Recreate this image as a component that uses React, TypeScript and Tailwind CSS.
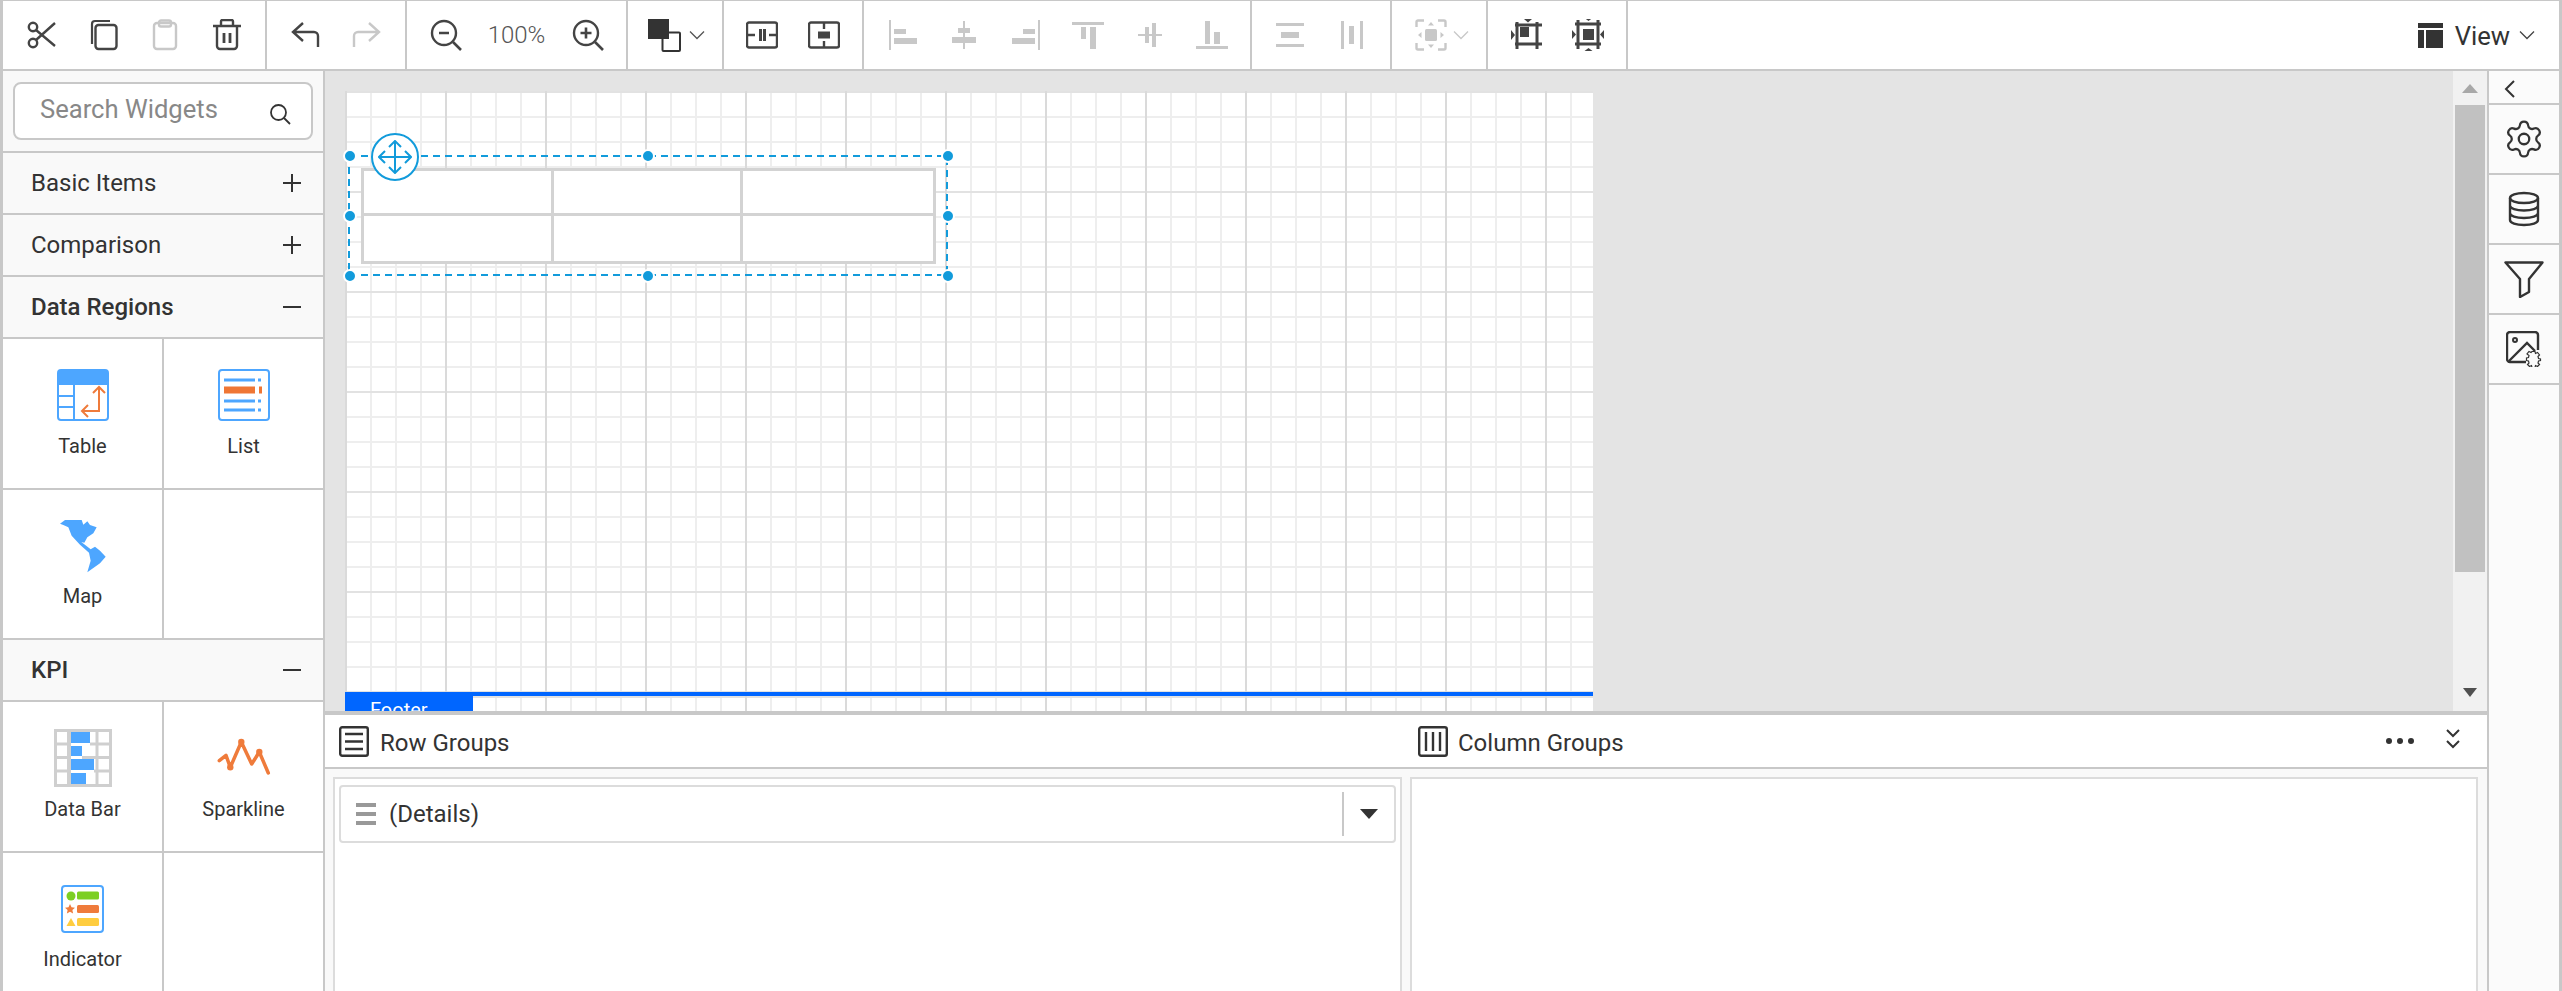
import type { ReactNode } from "react"
import { Settings } from "lucide-react"

const Ico = ({ children, size = 32, className = "" }: { children: ReactNode; size?: number; className?: string }) => (
  <svg width={size} height={size} viewBox="0 0 32 32" fill="none" stroke="currentColor" strokeWidth="2" className={className}>
    {children}
  </svg>
)

const Chevron = ({ className = "" }: { className?: string }) => (
  <svg width="16" height="10" viewBox="0 0 16 10" fill="none" stroke="currentColor" strokeWidth="1.3" className={className}>
    <path d="M1 1.5l7 7 7-7" />
  </svg>
)

function ToolBtn({ children, off }: { children: ReactNode; off?: boolean }) {
  return <div className={`flex h-full w-[62px] items-center justify-center ${off ? "text-[#c8c8c8]" : "text-[#444444]"}`}>{children}</div>
}

function Group({ children, w }: { children: ReactNode; w: string }) {
  return <div className={`flex h-full shrink-0 items-center justify-center border-r-2 border-[#c8c8c8] ${w}`}>{children}</div>
}

function Toolbar() {
  return (
    <div className="flex h-[71px] shrink-0 border-y-2 border-t-[1px] border-[#c8c8c8] bg-white">
      <Group w="w-[264px]">
        <ToolBtn>
          <Ico>
            <circle cx="8" cy="8" r="4.200" strokeWidth="2.400" />
            <circle cx="8" cy="24" r="4.200" strokeWidth="2.400" />
            <path d="M11 11l19 16M11 21L30 4" strokeWidth="2.400" />
          </Ico>
        </ToolBtn>
        <ToolBtn>
          <Ico>
            <path d="M5 25V5a3 3 0 0 1 3-3h15" strokeWidth="2.200" />
            <rect x="8.500" y="6" width="21" height="24" rx="3" strokeWidth="2.400" />
          </Ico>
        </ToolBtn>
        <ToolBtn off>
          <Ico>
            <rect x="5" y="4" width="22" height="26" rx="3" strokeWidth="2.400" />
            <rect x="10" y="1.500" width="12" height="6" rx="2" strokeWidth="2.400" />
          </Ico>
        </ToolBtn>
        <ToolBtn>
          <Ico>
            <path d="M2 7h28M10 7V2.500a1.500 1.500 0 0 1 1.500-1.500h9A1.500 1.500 0 0 1 22 2.500V7M6 7v20a3 3 0 0 0 3 3h14a3 3 0 0 0 3-3V7" strokeWidth="2.400" />
            <path d="M13 14v10M19 14v10" strokeWidth="2.800" />
          </Ico>
        </ToolBtn>
      </Group>
      <Group w="w-[140px]">
        <ToolBtn>
          <Ico>
            <path d="M14 4L4 13l10 9M4 13h21a4 4 0 0 1 4 4v11" strokeWidth="2.400" />
          </Ico>
        </ToolBtn>
        <ToolBtn off>
          <Ico>
            <path d="M18 4l10 9-10 9M28 13H7a4 4 0 0 0-4 4v11" strokeWidth="2.400" />
          </Ico>
        </ToolBtn>
      </Group>
      <Group w="w-[221px]">
        <div className="flex h-full w-[74px] items-center justify-center text-[#444444]">
          <Ico>
            <circle cx="14" cy="14" r="12" strokeWidth="2.400" />
            <path d="M9 14h10M23 23l8 8" strokeWidth="2.600" />
          </Ico>
        </div>
        <div className="w-[68px] text-center text-[24px] font-light text-[#555555]">100%</div>
        <div className="flex h-full w-[74px] items-center justify-center text-[#444444]">
          <Ico>
            <circle cx="14" cy="14" r="12" strokeWidth="2.400" />
            <path d="M8.500 14h11M14 8.500v11M23 23l8 8" strokeWidth="2.600" />
          </Ico>
        </div>
      </Group>
      <Group w="w-[96px]">
        <svg width="33" height="33" viewBox="0 0 33 33" className="ml-[3px]">
          <rect x="14.500" y="13.500" width="17.500" height="18.500" rx="1" fill="#fff" stroke="#333" strokeWidth="2" />
          <rect x="0" y="0" width="21" height="20" fill="#333" />
        </svg>
        <Chevron className="ml-[8px] text-[#555555]" />
      </Group>
      <Group w="w-[140px]">
        <ToolBtn>
          <Ico>
            <rect x="1" y="3.500" width="30" height="25" rx="2" strokeWidth="2.400" />
            <path d="M1 16h8M23 16h8" strokeWidth="2.400" />
            <rect x="13" y="10" width="3" height="12" fill="currentColor" stroke="none" />
            <rect x="17" y="10" width="3" height="12" fill="currentColor" stroke="none" />
          </Ico>
        </ToolBtn>
        <ToolBtn>
          <Ico>
            <rect x="1" y="3.500" width="30" height="25" rx="2" strokeWidth="2.400" />
            <path d="M16 3.500V10M16 22v6.500" strokeWidth="2.400" />
            <rect x="10" y="12.500" width="12" height="7" fill="currentColor" stroke="none" />
          </Ico>
        </ToolBtn>
      </Group>
      <Group w="w-[388px]">
        <ToolBtn off>
          <Ico>
            <g fill="currentColor" stroke="none">
              <rect x="3" y="1" width="2" height="30" />
              <rect x="8" y="10" width="12" height="5" />
              <rect x="8" y="19" width="23" height="6" />
            </g>
          </Ico>
        </ToolBtn>
        <ToolBtn off>
          <Ico>
            <g fill="currentColor" stroke="none">
              <rect x="15" y="2" width="2" height="28" />
              <rect x="10" y="9" width="12" height="5" />
              <rect x="4" y="18" width="24" height="6" />
            </g>
          </Ico>
        </ToolBtn>
        <ToolBtn off>
          <Ico>
            <g fill="currentColor" stroke="none">
              <rect x="28" y="1" width="2" height="30" />
              <rect x="13" y="10" width="12" height="5" />
              <rect x="2" y="19" width="23" height="6" />
            </g>
          </Ico>
        </ToolBtn>
        <ToolBtn off>
          <Ico>
            <g fill="currentColor" stroke="none">
              <rect x="0" y="3" width="32" height="3" />
              <rect x="9" y="8" width="5" height="12" />
              <rect x="18" y="8" width="6" height="22" />
            </g>
          </Ico>
        </ToolBtn>
        <ToolBtn off>
          <Ico>
            <g fill="currentColor" stroke="none">
              <rect x="4" y="15" width="24" height="2" />
              <rect x="11" y="8" width="4" height="16" />
              <rect x="18" y="4" width="4" height="24" />
            </g>
          </Ico>
        </ToolBtn>
        <ToolBtn off>
          <Ico>
            <g fill="currentColor" stroke="none">
              <rect x="0" y="27" width="32" height="3" />
              <rect x="9" y="2" width="5" height="23" />
              <rect x="18" y="13" width="6" height="12" />
            </g>
          </Ico>
        </ToolBtn>
      </Group>
      <Group w="w-[140px]">
        <ToolBtn off>
          <Ico>
            <g fill="currentColor" stroke="none">
              <rect x="2" y="4" width="28" height="3" />
              <rect x="7" y="13" width="18" height="6" />
              <rect x="2" y="25" width="28" height="3" />
            </g>
          </Ico>
        </ToolBtn>
        <ToolBtn off>
          <Ico>
            <g fill="currentColor" stroke="none">
              <rect x="5" y="2" width="3" height="28" />
              <rect x="13" y="7" width="5" height="18" />
              <rect x="24" y="2" width="3" height="28" />
            </g>
          </Ico>
        </ToolBtn>
      </Group>
      <Group w="w-[96px]">
        <div className="ml-[6px] text-[#c8c8c8]">
          <Ico>
            <path d="M1.500 8V3a1.500 1.500 0 0 1 1.500-1.500h6M23 1.500h6A1.500 1.500 0 0 1 30.500 3v5M1.500 24v5A1.500 1.500 0 0 0 3 30.500h6M23 30.500h6a1.500 1.500 0 0 0 1.500-1.500v-5" strokeWidth="2.400" />
            <rect x="10" y="10" width="12" height="12" rx="1.500" fill="currentColor" stroke="none" />
            <path d="M16 3l3 3.500h-6zM16 29l3-3.500h-6zM3 16l3.500-3v6zM29 16l-3.500-3v6z" fill="currentColor" stroke="none" />
          </Ico>
        </div>
        <Chevron className="ml-[6px] text-[#c8c8c8]" />
      </Group>
      <Group w="w-[140px]">
        <ToolBtn>
          <Ico>
            <path d="M7 3v27M27 3v27M5 6h27M5 25h27" strokeWidth="3" />
            <path d="M10 8h9v10H10z" fill="currentColor" stroke="none" />
            <path d="M1 11l4 5-4 5zM14 0h8l-4 3.500z" fill="currentColor" stroke="none" />
          </Ico>
        </ToolBtn>
        <ToolBtn>
          <Ico>
            <path d="M6 1v29M26 1v29M3 5h26M3 25h26" strokeWidth="3" />
            <rect x="11" y="10" width="11" height="11" fill="currentColor" stroke="none" />
            <path d="M12.500-1h8L16.500 2zM12.500 32h8l-4-3zM0 11l4 4.500L0 20zM32 11l-4 4.500 4 4.500z" fill="currentColor" stroke="none" />
          </Ico>
        </ToolBtn>
      </Group>
      <div className="flex flex-1 items-center justify-end pr-[24px] text-[#333333]">
        <svg width="25" height="25" viewBox="0 0 25 25" fill="#333">
          <rect x="0" y="0" width="25" height="5" />
          <rect x="0" y="7" width="6" height="18" />
          <rect x="8" y="7" width="17" height="18" />
        </svg>
        <span className="ml-[12px] mt-[3px] text-[25.6px]">View</span>
        <Chevron className="ml-[9px] text-[#444444]" />
      </div>
    </div>
  )
}

function AccordionRow({ label, open }: { label: string; open?: boolean }) {
  return (
    <div className="flex h-[62px] shrink-0 items-center justify-between border-b-2 border-[#c8c8c8] bg-[#f9f9f9] pl-[28px] pr-[22px]">
      <span className={`text-[24px] leading-none text-[#333333] ${open ? "font-medium" : ""}`}>{label}</span>
      <svg width="18" height="18" viewBox="0 0 18 18" stroke="#333" strokeWidth="2">
        <path d="M0 9h18" />
        {!open && <path d="M9 0v18" />}
      </svg>
    </div>
  )
}

function Tile({ icon, label }: { icon?: ReactNode; label?: string }) {
  return (
    <div className="flex h-[150.5px] flex-col items-center border-b-2 border-r-2 border-[#c8c8c8] pt-[26px] even:border-r-0">
      <div className="flex h-[60px] items-center justify-center">{icon}</div>
      <div className="mt-[8.500px] text-[20px] leading-[24px] text-[#333333]">{label}</div>
    </div>
  )
}

const TableIcon = () => (
  <svg width="52" height="52" viewBox="0 0 52 52" fill="none">
    <rect x="1" y="1" width="50" height="50" rx="3" stroke="#4da6ff" strokeWidth="2" />
    <rect x="1" y="1" width="50" height="15" fill="#4da6ff" />
    <path d="M2 27h16M2 38h16M17 16v34" stroke="#4da6ff" strokeWidth="2" />
    <path d="M42 18v24H25M36 24l6-6 6 6M31 36l-6 6 6 6" stroke="#ef7b3b" strokeWidth="2" />
  </svg>
)
const ListIcon = () => (
  <svg width="52" height="52" viewBox="0 0 52 52" fill="none">
    <rect x="1" y="1" width="50" height="50" rx="3" stroke="#4da6ff" strokeWidth="2" />
    <path d="M6 11h31M40 11h3M6 32h31M40 32h3M6 41h31M40 41h3" stroke="#4da6ff" strokeWidth="3" />
    <path d="M6 21h31M41 21h3" stroke="#ef7634" strokeWidth="7" />
  </svg>
)
const MapIcon = () => (
  <svg width="48" height="54" viewBox="178 535 142 162">
    <path
      fill="#4da6ff"
      d="M180 549L195 538H245L250 552L262 542L270 553L290 560L280 578L262 590L253 606L244 604L272 626L285 618L300 630L317 648L300 668L262 695L272 660L267 636L240 612L215 585L205 560L190 553Z"
    />
  </svg>
)
const DataBarIcon = () => (
  <svg width="58" height="58" viewBox="0 0 58 58" fill="none">
    <rect x="16" y="3" width="20" height="11" fill="#4da6ff" />
    <rect x="16" y="17" width="12" height="10" fill="#4da6ff" />
    <rect x="16" y="30" width="24" height="11" fill="#4da6ff" />
    <rect x="16" y="44" width="16" height="11" fill="#4da6ff" />
    <path d="M1.500 1.500h55v55h-55zM1.500 15h14M36 15h21M1.500 28.500h14M28 28.500h29M1.500 42h14M40 42h17M43 1.500v55" stroke="#cfcfcf" strokeWidth="3" />
    <path d="M15 1v56" stroke="#cfcfcf" strokeWidth="4" />
  </svg>
)
const SparkIcon = () => (
  <svg width="54" height="40" viewBox="0 0 54 40" fill="none">
    <path d="M2.300 22.700L9 17.300l4.300 12L24.300 4l10.400 22 7.600-12 9 21" stroke="#ef7b3b" strokeWidth="3.500" strokeLinecap="round" strokeLinejoin="round" />
    <circle cx="13.300" cy="29.300" r="3.200" fill="#ef7b3b" />
    <circle cx="24.300" cy="4" r="3.200" fill="#ef7b3b" />
    <circle cx="42.300" cy="14" r="3.200" fill="#ef7b3b" />
  </svg>
)
const IndicatorIcon = () => (
  <svg width="44" height="48" viewBox="0 0 44 48" fill="none">
    <rect x="1" y="1" width="41" height="46" rx="3" stroke="#4da6ff" strokeWidth="2" />
    <circle cx="10" cy="11" r="4.500" fill="#7ccf22" />
    <rect x="16" y="6.500" width="22" height="8" rx="1.500" fill="#7ccf22" />
    <path d="M9 19l1.500 3.300 3.500.4-2.600 2.300.7 3.500-3.100-1.800-3.100 1.800.7-3.500L4 22.700l3.500-.4z" fill="#ef7b3b" />
    <rect x="16" y="20" width="22" height="8" rx="1.500" fill="#ef7b3b" />
    <path d="M10 33l4.500 8h-9z" fill="#ffcd3f" />
    <rect x="16" y="33" width="22" height="8" rx="1.500" fill="#ffcd3f" />
  </svg>
)

function Sidebar() {
  return (
    <div className="flex w-[322px] shrink-0 flex-col overflow-hidden border-r-2 border-[#c8c8c8] bg-white">
      <div className="flex h-[82px] shrink-0 items-start border-b-2 border-[#c8c8c8] bg-[#f9f9f9] pl-[10px] pt-[11px]">
        <div className="flex h-[58px] w-[300px] items-center justify-between rounded-[8px] border-2 border-[#c8c8c8] bg-white pl-[25px] pr-[20px]">
          <span className="-mt-[4px] text-[25.6px] text-[#888888]">Search Widgets</span>
          <svg width="22" height="22" viewBox="0 0 22 22" fill="none" stroke="#333" strokeWidth="1.800" className="mt-[6px]">
            <circle cx="9.500" cy="9.500" r="7.500" />
            <path d="M15 15l6 6" />
          </svg>
        </div>
      </div>
      <AccordionRow label="Basic Items" />
      <AccordionRow label="Comparison" />
      <AccordionRow label="Data Regions" open />
      <div className="grid grid-cols-[161px_1fr]">
        <Tile icon={<TableIcon />} label="Table" />
        <Tile icon={<ListIcon />} label="List" />
        <Tile icon={<MapIcon />} label="Map" />
        <Tile />
      </div>
      <AccordionRow label="KPI" open />
      <div className="grid grid-cols-[161px_1fr]">
        <Tile icon={<DataBarIcon />} label="Data Bar" />
        <Tile icon={<SparkIcon />} label="Sparkline" />
        <Tile icon={<IndicatorIcon />} label="Indicator" />
        <Tile />
      </div>
    </div>
  )
}

const gridBg =
  "bg-[linear-gradient(to_right,#dadada_2px,transparent_2px),linear-gradient(to_bottom,#e2e2e2_2px,transparent_2px),linear-gradient(to_right,#eeeeee_2px,transparent_2px),linear-gradient(to_bottom,#eeeeee_2px,transparent_2px)] bg-[size:100px_100px,100px_100px,25px_25px,25px_25px]"

const Handle = ({ pos }: { pos: string }) => (
  <div className={`absolute h-[14px] w-[14px] rounded-full border-2 border-white bg-[#129bdb] ${pos}`} />
)

function Canvas() {
  return (
    <div className="flex h-[640px] shrink-0">
      <div className="h-full flex-1 overflow-hidden bg-[#e4e4e4] pl-[20px] pt-[20px]">
        <div className="flex h-[640px] w-[1248px] flex-col bg-white">
          <div className={`relative h-[601px] shrink-0 ${gridBg}`}>
            <svg width="603" height="124" className="absolute left-[2px] top-[63px]" fill="none">
              <rect x="2" y="2" width="598" height="119" stroke="#129bdb" strokeWidth="2" strokeDasharray="7 5" />
            </svg>
            <div className="absolute left-[16px] top-[77px] grid h-[96px] w-[575px] grid-cols-3 grid-rows-2 border-[3px] border-[#d3d3d3] bg-white">
              <div className="border-b-[3px] border-r-[3px] border-[#d3d3d3]" />
              <div className="border-b-[3px] border-r-[3px] border-[#d3d3d3]" />
              <div className="border-b-[3px] border-[#d3d3d3]" />
              <div className="border-r-[3px] border-[#d3d3d3]" />
              <div className="border-r-[3px] border-[#d3d3d3]" />
              <div />
            </div>
            <Handle pos="left-[-2px] top-[58px]" />
            <Handle pos="left-[296px] top-[58px]" />
            <Handle pos="left-[596px] top-[58px]" />
            <Handle pos="left-[-2px] top-[118px]" />
            <Handle pos="left-[596px] top-[118px]" />
            <Handle pos="left-[-2px] top-[178px]" />
            <Handle pos="left-[296px] top-[178px]" />
            <Handle pos="left-[596px] top-[178px]" />
            <div className="absolute left-[26px] top-[42px] flex h-[48px] w-[48px] items-center justify-center rounded-full border-2 border-[#129bdb] bg-white">
              <svg width="34" height="34" viewBox="0 0 34 34" fill="none" stroke="#129bdb" strokeWidth="2">
                <path d="M17 1v32M1 17h32M11 7l6-6 6 6M11 27l6 6 6-6M7 11l-6 6 6 6M27 11l6 6-6 6" />
              </svg>
            </div>
          </div>
          <div className="h-[4px] shrink-0 bg-[#0066ff]" />
          <div className={`h-[35px] shrink-0 ${gridBg}`}>
            <div className="h-full w-[128px] bg-[#0066ff] pl-[25px] pt-[3px] text-[20px] leading-[22px] text-white">Footer</div>
          </div>
        </div>
      </div>
      <div className="flex h-full w-[34px] shrink-0 flex-col items-center bg-[#f1f1f1]">
        <div className="flex h-[34px] w-full shrink-0 items-center justify-center">
          <svg width="16" height="9" viewBox="0 0 16 9" fill="#a8a8a8">
            <path d="M8 0l8 9H0z" />
          </svg>
        </div>
        <div className="h-[467px] w-[30px] shrink-0 bg-[#c1c1c1]" />
        <div className="flex flex-1 items-end justify-center pb-[14px]">
          <svg width="14" height="9" viewBox="0 0 14 9" fill="#505050">
            <path d="M0 0h14L7 9z" />
          </svg>
        </div>
      </div>
    </div>
  )
}

function GroupPanel() {
  return (
    <div className="flex flex-1 flex-col border-t-4 border-[#c8c8c8] bg-white">
      <div className="flex h-[54px] shrink-0 items-center border-b-2 border-[#c8c8c8] pr-[26px] text-[#333333]">
        <div className="flex w-[1093px] shrink-0 items-center pl-[14px]">
          <svg width="30" height="31" viewBox="0 0 30 31" fill="none" stroke="#333" strokeWidth="2.400">
            <rect x="1.200" y="1.200" width="27.600" height="28.600" rx="2" />
            <path d="M6 8h18M6 15.500h18M6 23h18" />
          </svg>
          <span className="ml-[11px] mt-[3px] text-[24px]">Row Groups</span>
        </div>
        <svg width="30" height="31" viewBox="0 0 30 31" fill="none" stroke="#333" strokeWidth="2.400">
          <rect x="1.200" y="1.200" width="27.600" height="28.600" rx="2" />
          <path d="M8 6v19M15 6v19M22 6v19" />
        </svg>
        <span className="ml-[10px] mt-[3px] text-[24px]">Column Groups</span>
        <div className="ml-auto mr-[31px] flex gap-[5px]">
          <div className="h-[6px] w-[6px] rounded-full bg-[#333333]" />
          <div className="h-[6px] w-[6px] rounded-full bg-[#333333]" />
          <div className="h-[6px] w-[6px] rounded-full bg-[#333333]" />
        </div>
        <svg width="16" height="20" viewBox="0 0 16 20" fill="none" stroke="#333" strokeWidth="2" className="-mt-[4px]">
          <path d="M2 1l6 6 6-6M2 12l6 6 6-6" />
        </svg>
      </div>
      <div className="flex flex-1 gap-[8px] bg-[#f9f9f9] pl-[8px] pr-[9px] pt-[8px]">
        <div className="flex w-[1069px] shrink-0 flex-col border-2 border-b-0 border-[#dcdcdc] bg-white px-[4px] pt-[6px]">
          <div className="flex h-[58px] items-center rounded-[4px] border-2 border-[#dcdcdc] pl-[15px] text-[#333333]">
            <div className="flex w-[20px] flex-col gap-[5px]">
              <div className="h-[4px] bg-[#999999]" />
              <div className="h-[4px] bg-[#999999]" />
              <div className="h-[4px] bg-[#999999]" />
            </div>
            <span className="ml-[13px] text-[24px]">(Details)</span>
            <div className="ml-auto h-[44px] w-[2px] bg-[#c8c8c8]" />
            <div className="flex w-[50px] justify-center">
              <svg width="18" height="10" viewBox="0 0 18 10" fill="#333">
                <path d="M0 0h18L9 10z" />
              </svg>
            </div>
          </div>
        </div>
        <div className="flex-1 border-2 border-b-0 border-[#dcdcdc] bg-white" />
      </div>
    </div>
  )
}

function Rail() {
  const cell = "flex h-[70px] shrink-0 items-center justify-center border-b-2 border-[#c8c8c8]"
  return (
    <div className="flex w-[72px] shrink-0 flex-col border-l-2 border-[#c8c8c8] bg-[#fbfbfb] text-[#333333]">
      <div className="flex h-[34px] shrink-0 items-center border-b-2 border-[#c8c8c8] pl-[15px]">
        <svg width="12" height="18" viewBox="0 0 12 18" fill="none" stroke="#333" strokeWidth="2" className="mt-[3px]">
          <path d="M10 1L2 9l8 8" />
        </svg>
      </div>
      <div className={cell}>
        <Settings size={42} strokeWidth={1.300} color="#333333" />
      </div>
      <div className={cell}>
        <svg width="32" height="36" viewBox="0 0 32 36" fill="none" stroke="#333" strokeWidth="2.400">
          <ellipse cx="16" cy="7" rx="14" ry="5" />
          <path d="M2 7v22c0 3 6 5 14 5s14-2 14-5V7M2 14.500c0 3 6 5 14 5s14-2 14-5M2 22c0 3 6 5 14 5s14-2 14-5" />
        </svg>
      </div>
      <div className={cell}>
        <svg width="40" height="37" viewBox="0 0 40 37" fill="none" stroke="#333" strokeWidth="2.400">
          <path d="M1.500 1.500h37L25 18v13l-9 5V18z" strokeLinejoin="round" />
        </svg>
      </div>
      <div className={cell}>
        <svg width="36" height="36" viewBox="0 0 36 36" fill="none" stroke="#333" strokeWidth="2.400">
          <path d="M20 31H4a3 3 0 0 1-3-3V4a3 3 0 0 1 3-3h25a3 3 0 0 1 3 3v15" />
          <circle cx="9" cy="9" r="2" strokeWidth="2" />
          <path d="M3 30l18-18 8 8" />
          <circle cx="27.500" cy="27.500" r="2.200" strokeWidth="1.200" />
          <path d="M26 20.500h3l.5 2 2-1 2 2.500-1.500 1.500.5 2 2 .5v1.500l-2 .5-.5 2 1.500 1.500-2 2-2-1-.5 2h-3l-.5-2-2 1-2-2 1.500-1.500-.5-2-2-.5V27l2-.5.5-2L21 23l2-2.500 2 1z" strokeWidth="1.200" fill="#fbfbfb" />
        </svg>
      </div>
    </div>
  )
}

export default function App() {
  return (
    <div className="flex h-[991px] w-[2562px] flex-col overflow-hidden border-x-[3px] border-[#c8c8c8] bg-white font-['Roboto',sans-serif]">
      <Toolbar />
      <div className="flex min-h-0 flex-1">
        <Sidebar />
        <div className="flex w-[2162px] shrink-0 flex-col">
          <Canvas />
          <GroupPanel />
        </div>
        <Rail />
      </div>
    </div>
  )
}
